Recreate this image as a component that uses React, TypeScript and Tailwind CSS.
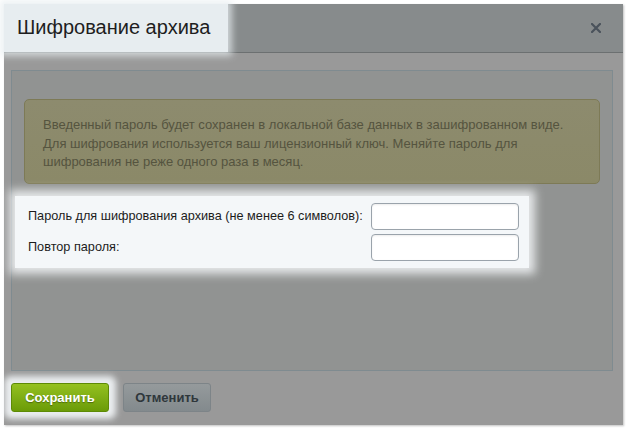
import React from "react";

const font = { fontFamily: '"Liberation Sans", Arial, sans-serif' };

const CloseIcon = () => (
  <svg width="10" height="10" viewBox="0 0 10 10" className="block">
    <path d="M1 1 L9 9 M9 1 L1 9" stroke="#4a525b" strokeWidth="2.2" strokeLinecap="square" />
  </svg>
);

const Field = ({ label }: { label: string }) => (
  <div className="flex items-center h-[27px]">
    <span className="w-[343px] text-[12.7px] text-[#1c1c1c] pt-[1px]">{label}</span>
    <input
      type="password"
      className="w-[148px] h-[27px] rounded-[4px] border border-[#9aa3ab] bg-white shadow-[inset_0_1px_2px_rgba(0,0,0,0.08)] outline-none"
    />
  </div>
);

export default function App() {
  return (
    <div className="w-[628px] h-[430px] bg-white pt-[4px] pl-[4px]" style={font}>
      <div className="w-[619px] h-[421px] flex flex-col bg-[#999999] shadow-[1px_1px_2px_rgba(0,0,0,0.25)]">
        {/* Header */}
        <div className="h-[49px] flex items-stretch justify-between bg-[#878b8c] border-b border-[#6c7071]">
          <div className="relative z-10 w-[224px] flex items-center pl-[13px] pb-[2px] bg-[#e7edf0] shadow-[0_0_7px_4px_rgba(231,237,240,0.75)]">
            <span className="text-[20px] text-[#1e1e1e] leading-none">Шифрование архива</span>
          </div>
          <div className="flex items-center pr-[22px] pb-[1px]">
            <CloseIcon />
          </div>
        </div>

        {/* Body */}
        <div className="pt-[17px] px-[7px]">
          <div className="h-[301px] w-[602px] bg-[#919392] border border-[#7f8b90] pt-[28px] px-[12px]">
            <div className="h-[85px] rounded-[5px] border border-[#7d7a56] bg-gradient-to-b from-[#8d8b6e] to-[#8b8968] pt-[16px] pl-[18px] pr-[10px] text-[13px] leading-[18.5px] text-[#55543f]">
              Введенный пароль будет сохранен в локальной базе данных в зашифрованном виде.
              <br />
              Для шифрования используется ваш лицензионный ключ. Меняйте пароль для
              <br />
              шифрования не реже одного раза в месяц.
            </div>

            <div className="mt-[12px] -ml-[9px] w-[514px] bg-[#f4f7f9] shadow-[0_0_9px_6px_rgba(244,247,249,0.85)] pl-[13px] pt-[7px] pb-[7px] flex flex-col gap-[4px]">
              <Field label="Пароль для шифрования архива (не менее 6 символов):" />
              <Field label="Повтор пароля:" />
            </div>
          </div>
        </div>

        {/* Buttons */}
        <div className="flex items-center gap-[14px] pl-[7px] pt-[12px]">
          <div className="relative z-10 bg-[#f4f7f9] shadow-[0_0_6px_7px_rgba(244,247,249,0.9)] rounded-[2px]">
            <button className="w-[98px] h-[29px] rounded-[3px] border border-[#5d8a05] bg-gradient-to-b from-[#94c11f] to-[#6b9b07] text-white text-[13px] font-bold [text-shadow:0_1px_1px_rgba(0,0,0,0.35)]">
              Сохранить
            </button>
          </div>
          <button className="w-[88px] h-[29px] rounded-[3px] border border-[#7d8488] bg-gradient-to-b from-[#959a9c] to-[#838a8d] text-[#2f373c] text-[13px] font-bold">
            Отменить
          </button>
        </div>
      </div>
    </div>
  );
}
